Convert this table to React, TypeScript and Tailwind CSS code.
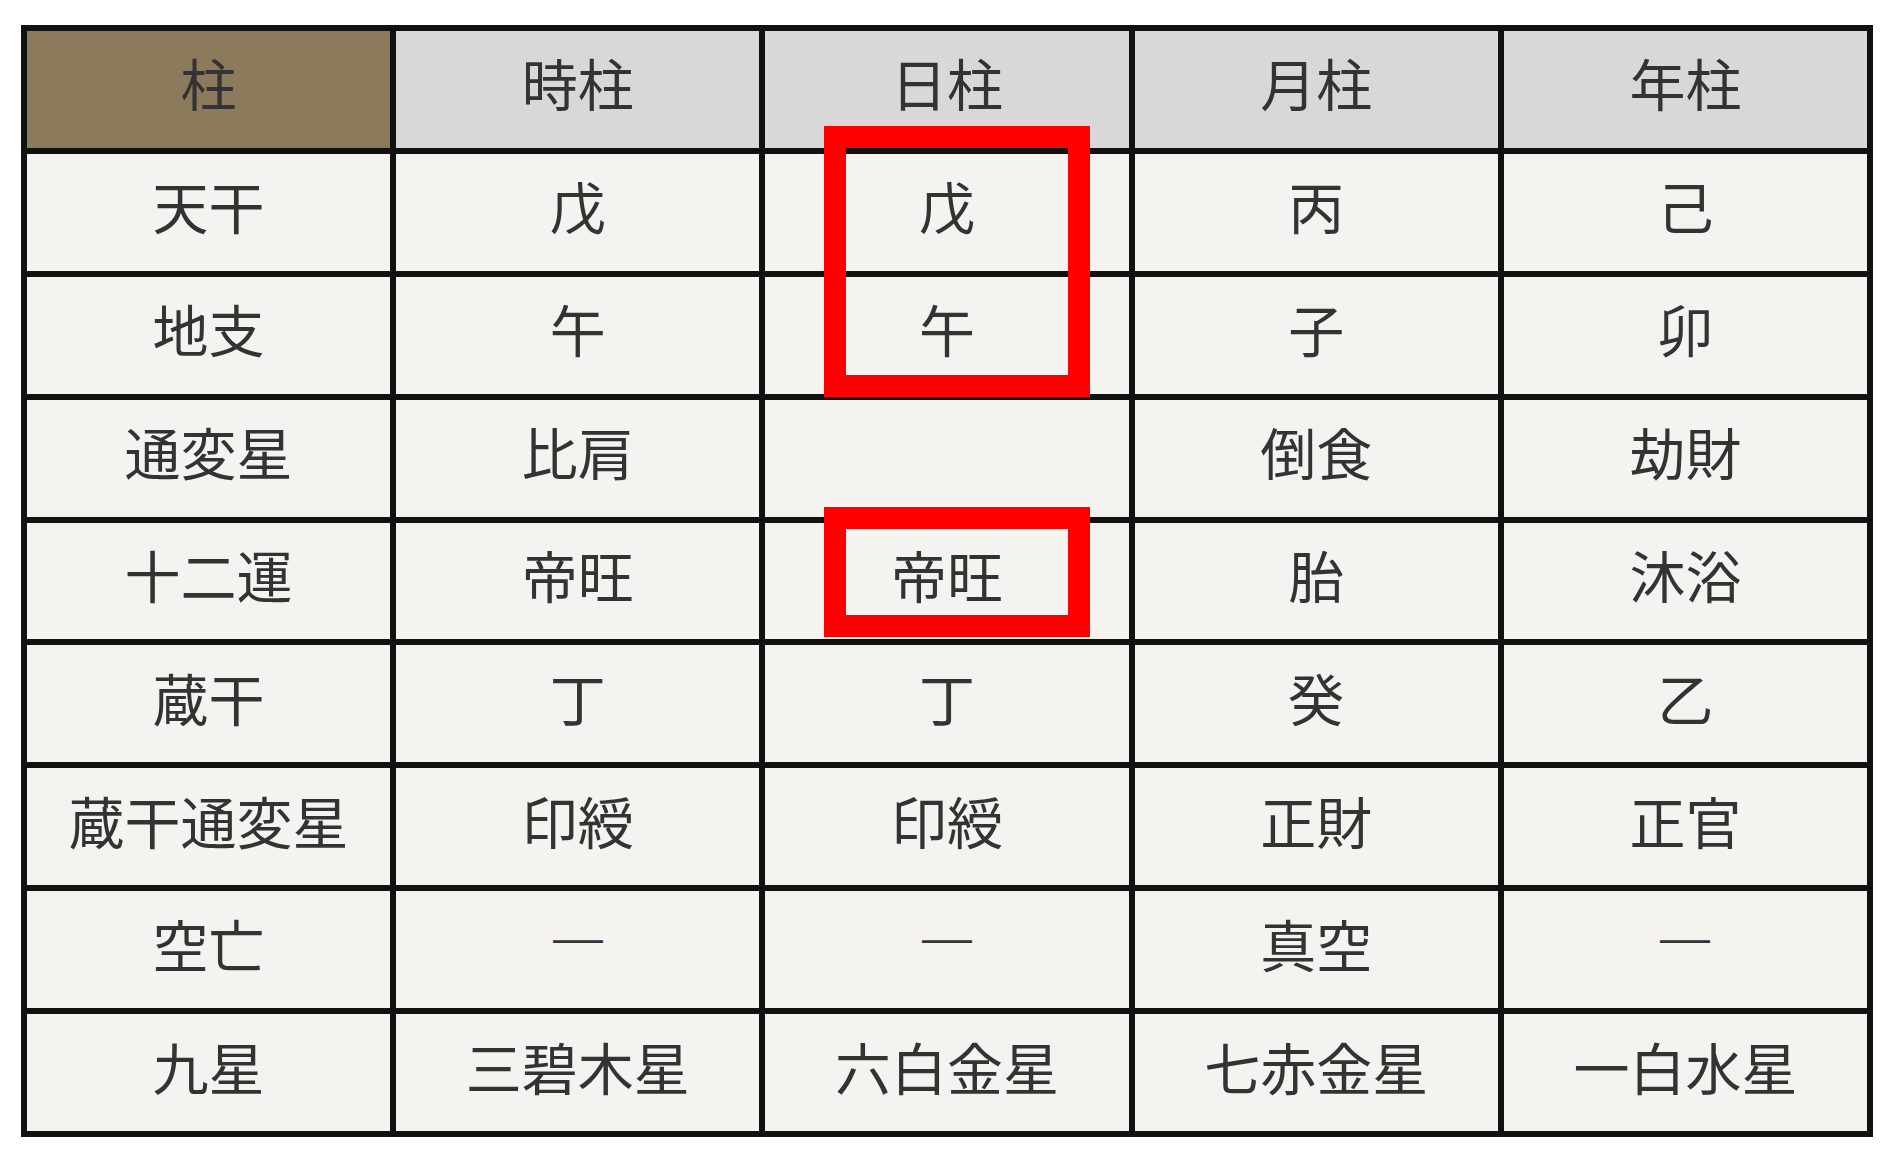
const headers = ["時柱", "日柱", "月柱", "年柱"];

const rows: [string, string[]][] = [
  ["天干", ["戊", "戊", "丙", "己"]],
  ["地支", ["午", "午", "子", "卯"]],
  ["通変星", ["比肩", "", "倒食", "劫財"]],
  ["十二運", ["帝旺", "帝旺", "胎", "沐浴"]],
  ["蔵干", ["丁", "丁", "癸", "乙"]],
  ["蔵干通変星", ["印綬", "印綬", "正財", "正官"]],
  ["空亡", ["—", "—", "真空", "—"]],
  ["九星", ["三碧木星", "六白金星", "七赤金星", "一白水星"]],
];

const cell = "flex items-center justify-center pb-[14px]";

export default function App() {
  return (
    <main
      className="min-h-screen bg-white pl-[21px] pt-[25px] text-[#333333]"
      style={{ fontFamily: '"Noto Sans CJK JP", "Noto Sans", sans-serif' }}
    >
      <div className="relative w-[1852px]">
        <div className="grid h-[1112px] grid-cols-5 grid-rows-9 gap-[6px] border-[6px] border-[#111111] bg-[#111111] text-[56px] leading-none">
          <div className={`${cell} bg-[#8b7a5b]`}>柱</div>
          {headers.map((h) => (
            <div key={h} className={`${cell} bg-[#d8d8d8]`}>
              {h}
            </div>
          ))}
          {rows.map(([label, values]) => (
            <>
              <div key={label} className={`${cell} bg-[#f4f3f0]`}>
                {label}
              </div>
              {values.map((v, i) => (
                <div key={label + i} className={`${cell} bg-[#f4f3f0]`}>
                  {v === "—" ? (
                    <span className="inline-block -translate-y-[5px] scale-x-[1.25] font-['Liberation_Sans'] text-[40px]">
                      —
                    </span>
                  ) : (
                    v
                  )}
                </div>
              ))}
            </>
          ))}
        </div>
        <div className="pointer-events-none absolute left-[803px] top-[101px] h-[271px] w-[266px] border-[22px] border-[#ff0000]" />
        <div className="pointer-events-none absolute left-[803px] top-[482px] h-[130px] w-[266px] border-[22px] border-[#ff0000]" />
      </div>
    </main>
  );
}
